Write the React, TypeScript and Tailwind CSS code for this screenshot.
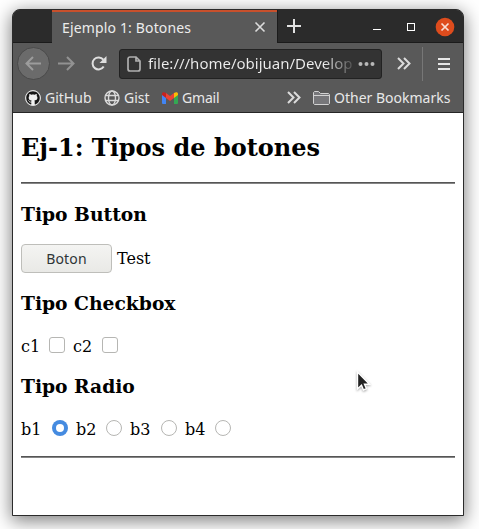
import React from 'react';
import { FaGithub } from 'react-icons/fa';

const ui = "font-['Noto_Sans',sans-serif] whitespace-nowrap";

function Chevrons() {
  return (
    <svg width="14" height="13" viewBox="0 0 14 13" fill="none" stroke="#dcdcdc" strokeWidth="2">
      <path d="M1 1l5.500 5.500L1 12M7 1l5.500 5.500L7 12" />
    </svg>
  );
}

function TitleBar() {
  return (
    <div className="flex h-[33px] bg-[#2b2b2b]">
      <div className="w-[39px] border-b border-[#1b1b1b]" />
      <div className="flex w-[225px] items-center border-t-2 border-[#c8502c] bg-[#595959] pb-px pl-[10px]">
        <span className={`${ui} w-[192px] text-[14px] tracking-[0.15px] text-[#ececec]`}>Ejemplo 1: Botones</span>
        <svg width="12" height="12" viewBox="0 0 12 12" stroke="#dcdcdc" strokeWidth="1.600"><path d="M1.500 1.500l9 9M10.500 1.500l-9 9" /></svg>
      </div>
      <div className="flex flex-1 items-center border-b border-l border-[#1b1b1b] pl-[9px]">
        <svg width="14" height="14" viewBox="0 0 14 14" stroke="#e2e2e2" strokeWidth="2"><path d="M7 0v14M0 7h14" /></svg>
        <div className="ml-[72px] mt-[7px] h-px w-[8px] bg-white" />
        <div className="ml-[26px] mt-px h-[8px] w-[8px] border border-white" />
        <svg className="ml-[20px] mt-[2px]" width="20" height="20" viewBox="0 0 20 20">
          <circle cx="10" cy="10" r="9.300" fill="#de4c1d" />
          <path d="M6.500 6.500l7 7M13.500 6.500l-7 7" stroke="#f8ded5" strokeWidth="1.700" />
        </svg>
      </div>
    </div>
  );
}

function Toolbar() {
  return (
    <div className="flex h-[41px] items-center pl-[4px]">
      <div className="flex h-[33px] w-[33px] items-center justify-center rounded-full border border-[#4a4a4a] bg-[#6b6b6b]">
        <svg width="17" height="15" viewBox="0 0 17 15" fill="none" stroke="#9c9c9c" strokeWidth="2"><path d="M16 7.500H2M8 1L1.500 7.500 8 14" /></svg>
      </div>
      <svg className="ml-[8px]" width="17" height="15" viewBox="0 0 17 15" fill="none" stroke="#929292" strokeWidth="2"><path d="M0 7.500h15M9 1l6.500 6.500L9 14" /></svg>
      <svg className="ml-[16px]" width="16" height="15" viewBox="0 0 16 15">
        <path d="M12.700 10.500A6 6 0 1 1 12.300 3.700" fill="none" stroke="#dedede" strokeWidth="2" />
        <path d="M15.500 0v7H8.500z" fill="#dedede" />
      </svg>
      <div className="ml-[12px] flex h-[30px] w-[263px] items-center rounded-[3px] border border-[#222] bg-[#333] pl-[7px]">
        <svg width="14" height="16" viewBox="0 0 14 16" fill="none" stroke="#b0b0b0" strokeWidth="1.700"><path d="M3 1h6l4 4v8a2 2 0 0 1-2 2H3a2 2 0 0 1-2-2V3a2 2 0 0 1 2-2zM9 1v4h4" /></svg>
        <span className={`${ui} ml-[7px] w-[206px] overflow-hidden bg-[linear-gradient(90deg,#eee_175px,#484848_206px)] bg-clip-text text-[15px] text-transparent`}>file:///home/obijuan/Develop</span>
        <svg className="ml-[4px]" width="18" height="4" viewBox="0 0 18 4" fill="#b8b8b8"><circle cx="2.500" cy="2" r="2" /><circle cx="8.500" cy="2" r="2" /><circle cx="14.500" cy="2" r="2" /></svg>
      </div>
      <div className="ml-[15px] flex"><Chevrons /></div>
      <div className="ml-[11px] h-[34px] w-px bg-[#777]" />
      <svg className="ml-[15px]" width="12" height="12" viewBox="0 0 12 12" fill="#e6e6e6"><path d="M0 0h12v2H0zM0 5h12v2H0zM0 10h12v2H0z" /></svg>
    </div>
  );
}

function Bookmarks() {
  return (
    <div className={`${ui} flex h-[29px] items-center border-b border-[#252525] pb-px pl-[12px] text-[14px] text-[#e8e8e8]`}>
      <span className="flex rounded-full border border-[#dedede] bg-[#f0f0f0] text-[#161616]"><FaGithub size={14} /></span>
      <span className="ml-[4px] w-[47px]">GitHub</span>
      <svg className="ml-[12px]" width="16" height="16" viewBox="0 0 16 16" fill="none" stroke="#dadada" strokeWidth="1.400"><circle cx="8" cy="8" r="7" /><ellipse cx="8" cy="8" rx="3.500" ry="7" /><path d="M1.500 5.500h13M1.500 10.500h13" /></svg>
      <span className="ml-[4px] w-[27px]">Gist</span>
      <svg className="ml-[11px]" width="16" height="12" viewBox="0 0 16 12">
        <path d="M0 2l4 3v7H1a1 1 0 0 1-1-1z" fill="#4285f4" />
        <path d="M16 2l-4 3v7h3a1 1 0 0 0 1-1z" fill="#34a853" />
        <path d="M4 1l4 3 4-3v5L8 9 4 6z" fill="#ea4335" />
        <path d="M0 2C0 0 2-.5 4 1v5L0 3z" fill="#c5221f" />
        <path d="M16 2c0-2-2-2.500-4-1v5l4-3z" fill="#fbbc04" />
      </svg>
      <span className="ml-[4px] w-[39px] tracking-[-0.2px]">Gmail</span>
      <div className="ml-[66px] flex"><Chevrons /></div>
      <svg className="ml-[12px]" width="17" height="14" viewBox="0 0 17 14" fill="#77777a" stroke="#d2d2d2"><path d="M.5 12.500v-11l1-1h4l2 2h8l1 1v9l-1 1h-14zM.5 4.500h16" /></svg>
      <span className="ml-[4px]">Other Bookmarks</span>
    </div>
  );
}

const h3 = 'font-bold text-[18.720px] leading-[22px]';
const rule = 'h-[2px] border-t border-[#555] bg-[#858585]';

function Radio({ checked = false }: { checked?: boolean }) {
  return (
    <span className={checked ? 'flex h-[16px] w-[16px] items-center justify-center rounded-full bg-[#458be0]' : 'h-[16px] w-[16px] rounded-full border border-[#b6b6b3] bg-white'}>
      {checked && <span className="h-[8px] w-[8px] rounded-full bg-white" />}
    </span>
  );
}

function Page() {
  return (
    <div className="h-[402px] bg-white px-[8px] pt-[21px] font-['DejaVu_Serif',serif] text-[16px] leading-[19px] text-black">
      <h1 className="mb-[20px] text-[24px] font-bold leading-[28px]">Ej-1: Tipos de botones</h1>
      <div className={rule} />
      <h2 className={`${h3} mt-[19px]`}>Tipo Button</h2>
      <div className="mt-[19px] flex h-[29px] items-center">
        <button className={`${ui} h-[29px] w-[91px] rounded-[4px] border border-[#bebeba] bg-linear-to-b from-[#f4f4f2] to-[#e9e9e6] text-[14px] tracking-[0.2px] text-[#2e3436]`}>Boton</button>
        <span className="ml-[5px]">Test</span>
      </div>
      <h2 className={`${h3} mt-[19px]`}>Tipo Checkbox</h2>
      <div className="mt-[23px] flex h-[19px] items-start">
        <span className="w-[28px]">c1</span>
        <span className="h-[16px] w-[16px] rounded-[3px] border border-[#b6b6b3]" />
        <span className="ml-[8px] w-[29px]">c2</span>
        <span className="h-[16px] w-[16px] rounded-[3px] border border-[#b6b6b3]" />
      </div>
      <h2 className={`${h3} mt-[19px]`}>Tipo Radio</h2>
      <div className="mt-[23px] flex h-[19px] items-start">
        <span className="w-[31px]">b1</span>
        <Radio checked />
        <span className="ml-[8px] w-[30px]">b2</span>
        <Radio />
        <span className="ml-[8px] w-[31px]">b3</span>
        <Radio />
        <span className="ml-[8px] w-[30px]">b4</span>
        <Radio />
      </div>
      <div className={`${rule} mt-[17px]`} />
    </div>
  );
}

export default function App() {
  return (
    <div className="relative h-[529px] w-[479px] overflow-hidden bg-white pl-[12px] pt-[9px]">
      <div className="h-[507px] w-[452px] overflow-hidden rounded-t-[8px] border border-[#2b2b2b] bg-[#595959] shadow-[0_4px_18px_1px_rgba(0,0,0,0.5)]">
        <TitleBar />
        <Toolbar />
        <Bookmarks />
        <Page />
      </div>
      <svg className="absolute left-[355px] top-[370px] drop-shadow-[0_1px_1px_rgba(0,0,0,0.35)]" width="16" height="22" viewBox="0 0 16 22">
        <path d="M2.500 2v17l4-3.700 2 4.700 3-1.300-2-4.400h5z" fill="#222" stroke="#fff" strokeWidth="1.400" />
      </svg>
    </div>
  );
}
